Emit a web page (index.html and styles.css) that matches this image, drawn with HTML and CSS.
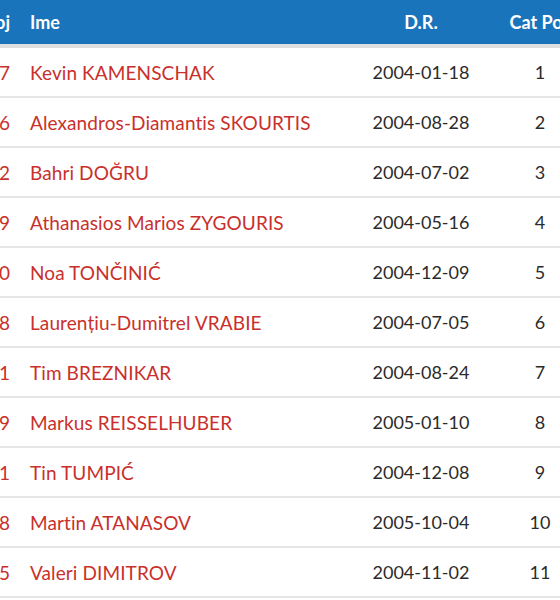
FILE: index.html
```html
<!DOCTYPE html>
<html lang="hr">
<head>
<meta charset="utf-8">
<title>Rezultati</title>
<link rel="stylesheet" href="styles.css">
</head>
<body>
<div class="viewport">
<table class="results">
<colgroup>
<col class="c-no"><col class="c-name"><col class="c-dob"><col class="c-pos"><col class="c-extra">
</colgroup>
<thead>
<tr><th class="no">Broj</th><th class="name">Ime</th><th class="dob">D.R.</th><th class="pos">Cat Pos</th><th class="extra">Ekipa</th></tr>
</thead>
<tbody>
<tr><td class="no">117</td><td class="name">Kevin KAMENSCHAK</td><td class="dob">2004-01-18</td><td class="pos">1</td><td class="extra"></td></tr>
<tr><td class="no">126</td><td class="name">Alexandros-Diamantis SKOURTIS</td><td class="dob">2004-08-28</td><td class="pos">2</td><td class="extra"></td></tr>
<tr><td class="no">132</td><td class="name">Bahri DOĞRU</td><td class="dob">2004-07-02</td><td class="pos">3</td><td class="extra"></td></tr>
<tr><td class="no">129</td><td class="name">Athanasios Marios ZYGOURIS</td><td class="dob">2004-05-16</td><td class="pos">4</td><td class="extra"></td></tr>
<tr><td class="no">140</td><td class="name">Noa TONČINIĆ</td><td class="dob">2004-12-09</td><td class="pos">5</td><td class="extra"></td></tr>
<tr><td class="no">158</td><td class="name">Laurențiu-Dumitrel VRABIE</td><td class="dob">2004-07-05</td><td class="pos">6</td><td class="extra"></td></tr>
<tr><td class="no">111</td><td class="name">Tim BREZNIKAR</td><td class="dob">2004-08-24</td><td class="pos">7</td><td class="extra"></td></tr>
<tr><td class="no">119</td><td class="name">Markus REISSELHUBER</td><td class="dob">2005-01-10</td><td class="pos">8</td><td class="extra"></td></tr>
<tr><td class="no">101</td><td class="name">Tin TUMPIĆ</td><td class="dob">2004-12-08</td><td class="pos">9</td><td class="extra"></td></tr>
<tr><td class="no">108</td><td class="name">Martin ATANASOV</td><td class="dob">2005-10-04</td><td class="pos">10</td><td class="extra"></td></tr>
<tr><td class="no">105</td><td class="name">Valeri DIMITROV</td><td class="dob">2004-11-02</td><td class="pos">11</td><td class="extra"></td></tr>
<tr><td class="no">112</td><td class="name">Ivan HORVAT</td><td class="dob">2004-03-14</td><td class="pos">12</td><td class="extra"></td></tr>
</tbody>
</table>
</div>
</body>
</html>
```

FILE: styles.css
```css
html, body {
  margin: 0;
  padding: 0;
  background: #fff;
}
.viewport {
  width: 560px;
  height: 600px;
  overflow: hidden;
}
.results {
  margin-left: -40px;
  border-collapse: collapse;
  table-layout: fixed;
  width: 700px;
  font-family: "Lato", "Open Sans", sans-serif;
  font-size: 18px;
}
.c-no { width: 58px; }
.c-name { width: 322px; }
.c-dob { width: 162px; }
.c-pos { width: 76px; }
.c-extra { width: 82px; }

.results thead tr {
  background: #1a74bb;
  border-bottom: 4px solid #dedede;
}
.results th {
  height: 44px;
  padding: 0;
  color: #fff;
  font-weight: 700;
  font-size: 18px;
  white-space: nowrap;
  overflow: hidden;
}
.results td {
  height: 48px;
  padding: 0;
  white-space: nowrap;
  border-bottom: 2px solid #e6e6e6;
  color: #2b2b2b;
}
.results .no { text-align: right; padding-right: 8px; }
.results td.no { color: #c9302c; font-size: 19px; }
.results .name { text-align: left; padding-left: 12px; }
.results td.name { color: #c9302c; font-size: 19px; letter-spacing: 0.1px; }
.results .dob, .results .pos { text-align: center; }
.results .extra { text-align: left; }
```
